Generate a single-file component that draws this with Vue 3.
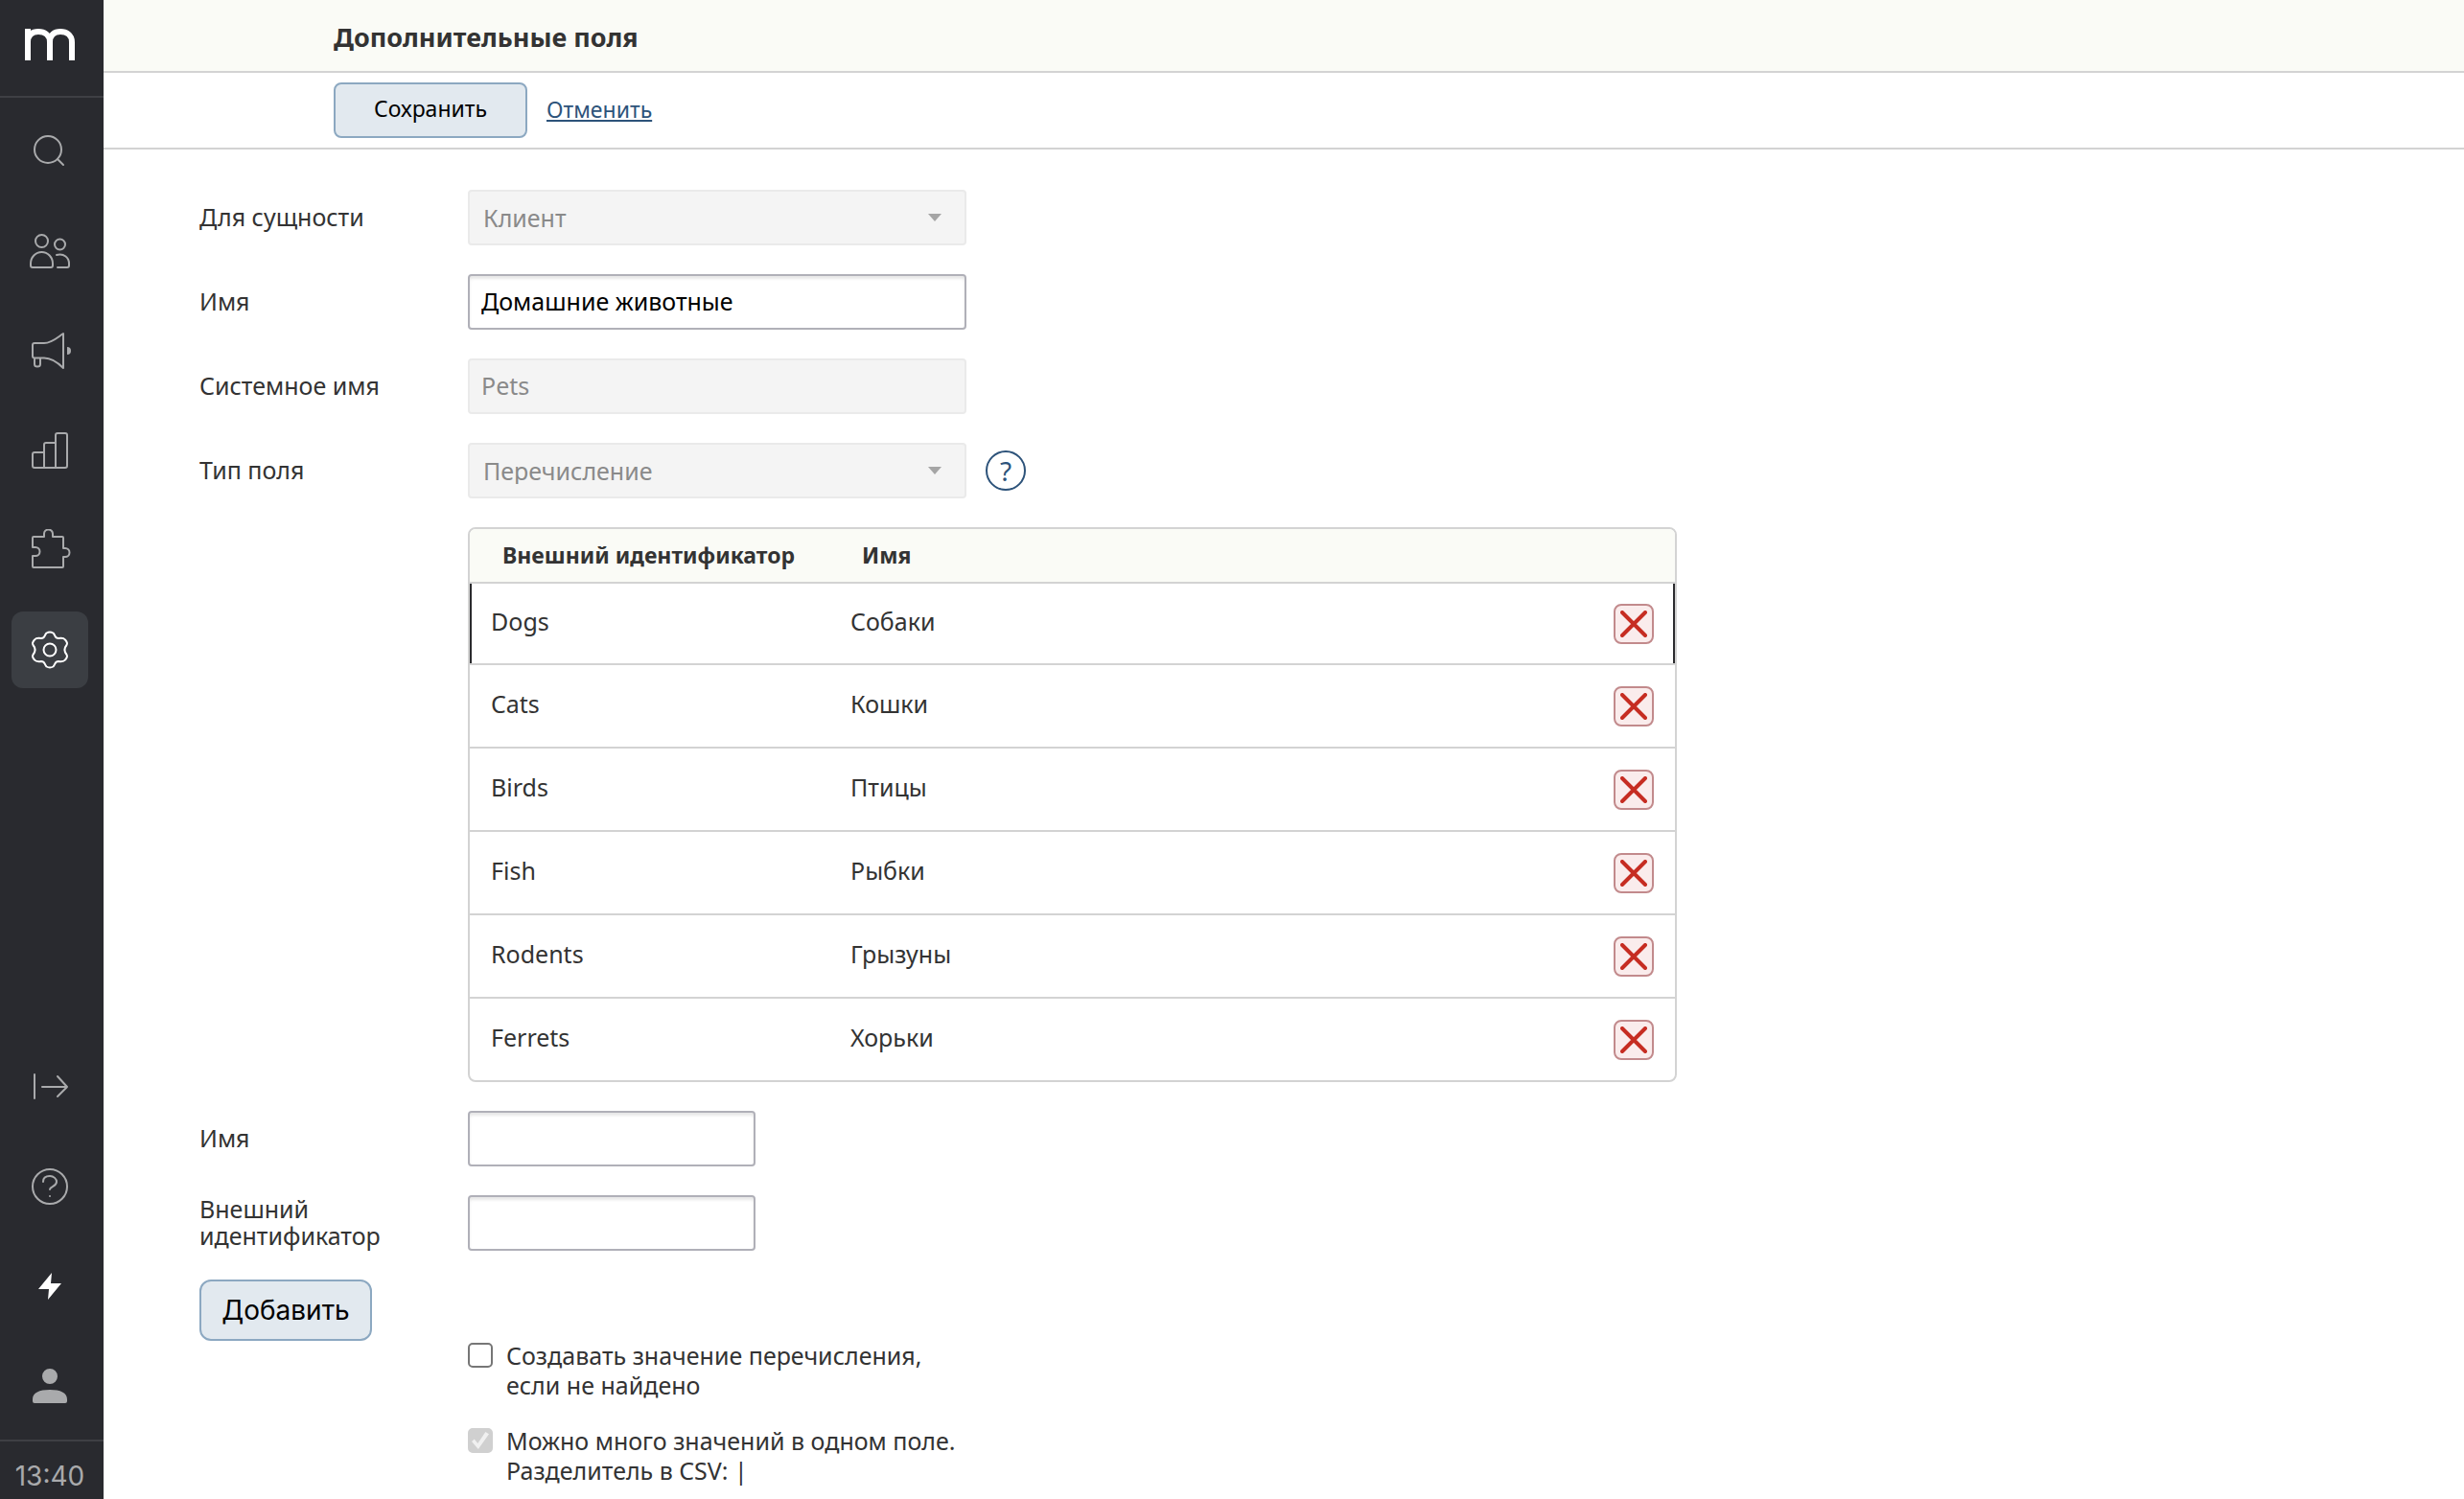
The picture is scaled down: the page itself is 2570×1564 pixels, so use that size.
<script setup>
import { ref } from 'vue'

const entity = ref('Клиент')
const name = ref('Домашние животные')
const systemName = ref('Pets')
const fieldType = ref('Перечисление')
const newName = ref('')
const newId = ref('')
const createMissing = ref(false)
const multiple = ref(true)

const rows = ref([
  { id: 'Dogs', name: 'Собаки' },
  { id: 'Cats', name: 'Кошки' },
  { id: 'Birds', name: 'Птицы' },
  { id: 'Fish', name: 'Рыбки' },
  { id: 'Rodents', name: 'Грызуны' },
  { id: 'Ferrets', name: 'Хорьки' },
])

function remove(index) {
  rows.value.splice(index, 1)
}

function add() {
  if (!newName.value) return
  rows.value.push({ id: newId.value, name: newName.value })
  newName.value = ''
  newId.value = ''
}
</script>

<template>
  <div class="app">
    <nav class="rail" aria-label="Главное меню">
      <a class="logo" href="#" aria-label="Главная">
        <svg width="54" height="36" viewBox="0 0 54 36" fill="none" stroke="#fff" stroke-width="6">
          <path d="M4 36V3M4 17C4 9 9 6 15 6s12 3 12 11v19M27 17c0-8 5-11 11-11s12 3 12 11v19" />
        </svg>
      </a>
      <div class="group">
        <a class="item" href="#" aria-label="Поиск">
          <svg width="44" height="44" viewBox="0 0 44 44"><circle cx="20" cy="20" r="14" /><path d="M30 30l6 6" /></svg>
        </a>
        <a class="item" href="#" aria-label="Клиенты">
          <svg width="44" height="44" viewBox="0 0 44 44"><circle cx="13.500" cy="11.500" r="6.500" /><circle cx="32.500" cy="15" r="5.500" /><path d="M2 37V35a11.500 12 0 0 1 23 0v2q0 2-2 2H4q-2 0-2-2M29 26c8-2 13 3 13 9v2q0 2-2 2H30" /></svg>
        </a>
        <a class="item" href="#" aria-label="Кампании">
          <svg width="44" height="44" viewBox="0 0 44 44"><path d="M4 16q0-2 2-2h10C24 14 30 8 36 4v36C30 34 24 29.500 16 29.500H6q-2 0-2-2zM6 30v6q0 2.500 3 2.500t3-2.500v-6" /><path class="solid" stroke="none" d="M40 18a4 4 0 0 1 0 8z" /></svg>
        </a>
        <a class="item" href="#" aria-label="Отчёты">
          <svg width="44" height="44" viewBox="0 0 44 44"><path d="M16 40V16q0-2 2-2h10M28 40V6q0-2 2-2h8q2 0 2 2v32q0 2-2 2H6q-2 0-2-2V26q0-2 2-2h10" /></svg>
        </a>
        <a class="item" href="#" aria-label="Интеграции">
          <svg width="44" height="44" viewBox="0 0 44 44"><path d="M5 8h11V5a4.500 4.500 0 0 1 9 0v3h10q1 0 1 1v11h2a4.500 4.500 0 0 1 0 9h-2v10q0 1-1 1H5q-1 0-1-1V28h3a4.500 4.500 0 0 0 0-9H4V9q0-1 1-1z" /></svg>
        </a>
        <a class="item active" href="#" aria-label="Настройки">
          <svg width="44" height="44" viewBox="0 0 44 44"><circle cx="22" cy="22" r="6.500" /><path d="M18.500 4.500Q22 2.500 25.500 4.500C28 7 27 10 31 10Q36 9 38 11.500Q41 15 39.500 17C37 20 37 24 39.500 27Q41 29 38 32.500Q36 35 31 34C27 34 28 37 25.500 39.500Q22 41.500 18.500 39.500C16 37 17 34 13 34Q8 35 6 32.500Q3 29 4.500 27C7 24 7 20 4.500 17Q3 15 6 11.500Q8 9 13 10C17 10 16 7 18.500 4.500z" /></svg>
        </a>
      </div>
      <div class="group bottom">
        <a class="item" href="#" aria-label="Развернуть">
          <svg width="44" height="44" viewBox="0 0 44 44"><path d="M6 9v25M14 22h26M30 11l10 11-10 10" /></svg>
        </a>
        <a class="item" href="#" aria-label="Помощь">
          <svg width="44" height="44" viewBox="0 0 44 44"><circle cx="22" cy="22" r="18" /><path d="M15 17c0-4 3-6 7-6s7 3 7 6c0 5-7 5-7 8" /><circle cx="22" cy="32" r="1" class="solid" stroke="none" /></svg>
        </a>
        <a class="item white" href="#" aria-label="События">
          <svg width="44" height="44" viewBox="0 0 44 44"><path class="solid" stroke="none" d="M24 8L10 25h11l-1 11 14-17H23z" /></svg>
        </a>
        <a class="item" href="#" aria-label="Профиль">
          <svg width="44" height="44" viewBox="0 0 44 44"><path class="solid" stroke="none" d="M22 4a8 8 0 0 1 0 16 8 8 0 0 1 0-16M4 36c0-7 7-10 18-10s18 3 18 10v2q0 2-2 2H6q-2 0-2-2z" /></svg>
        </a>
      </div>
      <time class="clock">13:40</time>
    </nav>

    <main class="page">
      <header class="title"><h1>Дополнительные поля</h1></header>
      <div class="actions">
        <button class="btn save" type="submit" form="field-form">Сохранить</button>
        <a class="cancel" href="#">Отменить</a>
      </div>

      <form id="field-form" class="form" @submit.prevent>
        <div class="row">
          <label for="entity">Для сущности</label>
          <span class="select">
            <select id="entity" v-model="entity" class="field" disabled><option>Клиент</option></select>
          </span>
        </div>
        <div class="row">
          <label for="name">Имя</label>
          <input id="name" v-model="name" class="field" type="text">
        </div>
        <div class="row">
          <label for="system">Системное имя</label>
          <input id="system" v-model="systemName" class="field" type="text" disabled>
        </div>
        <div class="row">
          <label for="type">Тип поля</label>
          <span class="select">
            <select id="type" v-model="fieldType" class="field" disabled><option>Перечисление</option></select>
          </span>
          <button class="help" type="button">?</button>
        </div>

        <div class="table-box">
          <table>
            <thead>
              <tr><th class="col-id">Внешний идентификатор</th><th>Имя</th><th class="col-del"></th></tr>
            </thead>
            <tbody>
              <tr v-for="(row, i) in rows" :key="row.id">
                <td>{{ row.id }}</td>
                <td>{{ row.name }}</td>
                <td class="del-cell">
                  <button class="del" type="button" :aria-label="'Удалить ' + row.name" @click="remove(i)">
                    <svg width="28" height="28" viewBox="0 0 28 28"><path d="M2 2l24 24M26 2L2 26" /></svg>
                  </button>
                </td>
              </tr>
            </tbody>
          </table>
        </div>

        <div class="row">
          <label for="new-name">Имя</label>
          <input id="new-name" v-model="newName" class="field short" type="text">
        </div>
        <div class="row">
          <label for="new-id">Внешний идентификатор</label>
          <input id="new-id" v-model="newId" class="field short" type="text">
        </div>
        <button class="btn add" type="button" @click="add">Добавить</button>

        <div class="check">
          <input id="create" v-model="createMissing" type="checkbox">
          <label for="create">Создавать значение перечисления,<br>если не найдено</label>
        </div>
        <div class="check">
          <input id="multi" v-model="multiple" type="checkbox" disabled>
          <label for="multi">Можно много значений в одном поле.<br>Разделитель в CSV: |</label>
        </div>
      </form>
    </main>
  </div>
</template>

<style>
body { background: #fff; }
</style>

<style scoped>
.app {
  display: flex;
  min-height: 100vh;
  font: 25px/28px "Noto Sans", sans-serif;
  color: #333;
}
.app *, .app *::before { box-sizing: border-box; }

.rail {
  flex: none;
  position: sticky;
  top: 0;
  width: 108px;
  height: 100vh;
  display: flex;
  flex-direction: column;
  background: #292a2f;
}
.logo {
  height: 102px;
  padding: 27px 25px;
  border-bottom: 2px solid #3e3f44;
}
.logo svg { display: block; }
.group {
  display: flex;
  flex-direction: column;
  gap: 24px;
  padding: 16px 12px;
}
.bottom { margin-top: auto; }
.item {
  width: 80px;
  height: 80px;
  display: grid;
  place-items: center;
  border-radius: 12px;
  color: #a9aaac;
}
.item svg {
  fill: none;
  stroke: currentColor;
  stroke-width: 2;
  stroke-linecap: round;
  stroke-linejoin: round;
}
.item svg .solid { fill: currentColor; }
.active { background: #3b3e43; color: #fff; }
.white { color: #fff; }
.clock {
  height: 62px;
  padding-right: 4px;
  border-top: 2px solid #3e3f44;
  font: 28px/72px Inter, sans-serif;
  text-align: center;
  color: #a9aaac;
}

.page { flex: 1; }
.title {
  height: 76px;
  padding: 0 240px;
  background: #fafbf6;
  border-bottom: 2px solid #d3d3d3;
}
h1 { margin: 0; font-size: 27px; line-height: 78px; }
.actions {
  display: flex;
  align-items: center;
  gap: 20px;
  height: 80px;
  padding: 0 240px;
  border-bottom: 2px solid #d3d3d3;
}
.btn {
  background: #e2e9ef;
  border: 2px solid #8ca8c1;
  border-radius: 8px;
  color: #000;
}
.save { width: 202px; height: 58px; padding: 0 0 4px; font: inherit; font-size: 23px; }
.cancel { padding-bottom: 2px; font-size: 23px; color: #2d537a; }

.form {
  display: flex;
  flex-direction: column;
  align-items: flex-start;
  padding: 42px 100px 0;
}
.row {
  display: flex;
  align-items: center;
  min-height: 58px;
  margin-bottom: 30px;
}
.row label { width: 280px; padding-right: 60px; padding-bottom: 2px; }
.field {
  display: block;
  width: 520px;
  height: 58px;
  padding: 0 12px 2px;
  border: 2px solid #b0b0b8;
  border-radius: 4px;
  background: #fff;
  box-shadow: inset 0 3px 3px #e8e8e8;
  font: inherit;
  color: #000;
}
.field:disabled {
  background: #f4f4f4;
  border-color: #eaeaea;
  box-shadow: none;
  color: #8a8a8a;
  opacity: 1;
}
.short { width: 300px; }
select.field { appearance: none; padding: 0 14px; }
.select { position: relative; }
.select::after {
  content: "";
  position: absolute;
  top: 25px;
  right: 26px;
  border: 7px solid transparent;
  border-top: 8px solid #a5a5a5;
  border-bottom: 0;
}
.help {
  width: 42px;
  height: 42px;
  margin-left: 20px;
  padding: 0;
  border: 2px solid #2d537a;
  border-radius: 50%;
  background: none;
  font: inherit;
  font-size: 28px;
  color: #2d537a;
}

.table-box {
  width: 1261px;
  margin: 0 0 30px 280px;
  border: 2px solid #d3d3d3;
  border-radius: 8px;
  overflow: hidden;
}
table {
  width: 100%;
  border-collapse: separate;
  border-spacing: 0;
  table-layout: fixed;
}
th {
  height: 57px;
  padding: 0 0 2px 34px;
  background: #fafbf6;
  border-bottom: 2px solid #d3d3d3;
  text-align: left;
  font-size: 23px;
  white-space: nowrap;
}
.col-id { width: 375px; }
.col-del { width: 100px; }
td {
  height: 87px;
  padding: 0 22px 6px;
  border-bottom: 2px solid #d3d3d3;
}
tbody tr:first-child td { height: 85px; }
tbody tr:last-child td { height: 85px; border-bottom: 0; }
tbody tr:first-child td:first-child { box-shadow: inset 2px 0 #2b2b2e; }
tbody tr:first-child td:last-child { box-shadow: inset -2px 0 #2b2b2e; }
td.del-cell { padding: 0 22px 0 36px; }
.del {
  display: grid;
  place-items: center;
  width: 42px;
  height: 42px;
  padding: 0;
  border: 2px solid #c28a8c;
  border-radius: 8px;
  background: #faecec;
}
.del svg {
  stroke: #c62d22;
  stroke-width: 4;
  stroke-linecap: round;
}
.add {
  width: 180px;
  height: 64px;
  padding: 0;
  border-radius: 12px;
  font: 28px/36px Inter, sans-serif;
}
.check {
  display: flex;
  gap: 14px;
  margin-left: 280px;
  margin-bottom: 27px;
  line-height: 31px;
}
.check:last-child { margin-bottom: 0; }
.check input {
  appearance: none;
  display: grid;
  place-items: center;
  width: 26px;
  height: 26px;
  margin: 2px 0;
  border: 2px solid #767676;
  border-radius: 5px;
  background: #fff;
}
.check input:checked::before {
  content: "";
  width: 18px;
  height: 18px;
  background: #fff;
  clip-path: polygon(0 55%, 15% 42%, 35% 66%, 80% 0, 100% 12%, 38% 100%);
}
.check input:checked { border-color: #767676; background: #767676; }
.check input:disabled { border-color: #d0d0d0; background: #d0d0d0; }
.check input:disabled::before { background: #f0f0f0; }
</style>
